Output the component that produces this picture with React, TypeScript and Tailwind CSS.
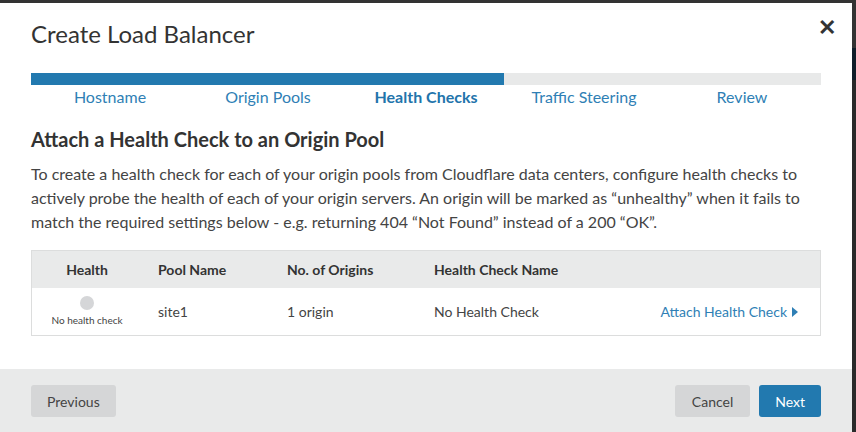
const steps = ["Hostname", "Origin Pools", "Health Checks", "Traffic Steering", "Review"];

export default function App() {
  return (
    <div
      className="w-[856px] h-[432px] overflow-hidden bg-[#333333] pt-[3px] flex"
      style={{ fontFamily: "Lato, 'Open Sans', sans-serif" }}
    >
      <div className="relative h-full w-[852px] bg-white flex flex-col">
        <button className="absolute right-[16px] top-[13px] text-[#333] text-[22px] font-bold leading-none">
          ✕
        </button>
        <div className="px-[31px] flex-1">
          <h1 className="mt-[15px] text-[24px] leading-[32px] text-[#333]">Create Load Balancer</h1>

          <div className="mt-[23px] h-[12px] bg-[#e8e9e9] flex">
            <div className="w-[473px] bg-[#2279af]" />
          </div>
          <div className="grid grid-cols-5 mt-[1px]">
            {steps.map((s) => (
              <div
                key={s}
                className={
                  "text-center text-[16px] leading-[22px] text-[#2f7fb5]" +
                  (s === "Health Checks" ? " font-bold text-[#2274ab]" : "")
                }
              >
                {s}
              </div>
            ))}
          </div>

          <h2 className="mt-[18px] text-[20px] leading-[26px] font-bold text-[#333]">
            Attach a Health Check to an Origin Pool
          </h2>
          <p className="mt-[10px] text-[16px] leading-[24px] text-[#444]">
            To create a health check for each of your origin pools from Cloudflare data centers, configure health checks to
            actively probe the health of each of your origin servers. An origin will be marked as “unhealthy” when it fails to
            match the required settings below - e.g. returning 404 “Not Found” instead of a 200 “OK”.
          </p>

          <div className="mt-[16px] border border-[#dcdddd]">
            <div className="h-[37px] bg-[#e9eaea] flex items-center text-[14px] font-bold text-[#333]">
              <div className="w-[110px] text-center">Health</div>
              <div className="w-[129px] pl-[16px]">Pool Name</div>
              <div className="w-[147px] pl-[16px]">No. of Origins</div>
              <div className="flex-1 pl-[16px]">Health Check Name</div>
            </div>
            <div className="h-[47px] flex items-center text-[14px] text-[#444]">
              <div className="w-[110px] flex flex-col items-center">
                <div className="w-[14px] h-[14px] rounded-full bg-[#d5d6d8]" />
                <div className="text-[10px] leading-[14px] mt-[3px] text-[#444]">No health check</div>
              </div>
              <div className="w-[129px] pl-[16px]">site1</div>
              <div className="w-[147px] pl-[16px]">1 origin</div>
              <div className="flex-1 pl-[16px]">No Health Check</div>
              <div className="pr-[22px] flex items-center gap-[5px] text-[#2f7fb5]">
                Attach Health Check
                <svg width="6" height="10" viewBox="0 0 6 10">
                  <path d="M0 0 L6 5 L0 10 Z" fill="#2f7fb5" />
                </svg>
              </div>
            </div>
          </div>
        </div>

        <div className="h-[63px] bg-[#e9eaea] px-[31px] flex items-start pt-[16px] gap-[9px]">
          <button className="h-[32px] px-[16px] rounded-[3px] bg-[#d5d6d7] text-[14px] text-[#444]">Previous</button>
          <div className="flex-1" />
          <button className="h-[32px] px-[17px] rounded-[3px] bg-[#d5d6d7] text-[14px] text-[#444]">Cancel</button>
          <button className="h-[32px] px-[16px] rounded-[3px] bg-[#2279af] text-[14px] text-white">Next</button>
        </div>
      </div>
      <div className="flex-1 flex flex-col">
        <div className="h-[45px]" />
        <div className="h-[32px] bg-[#0f1d29]" />
        <div className="flex-1 bg-[#2a2a2a]" />
      </div>
    </div>
  );
}
